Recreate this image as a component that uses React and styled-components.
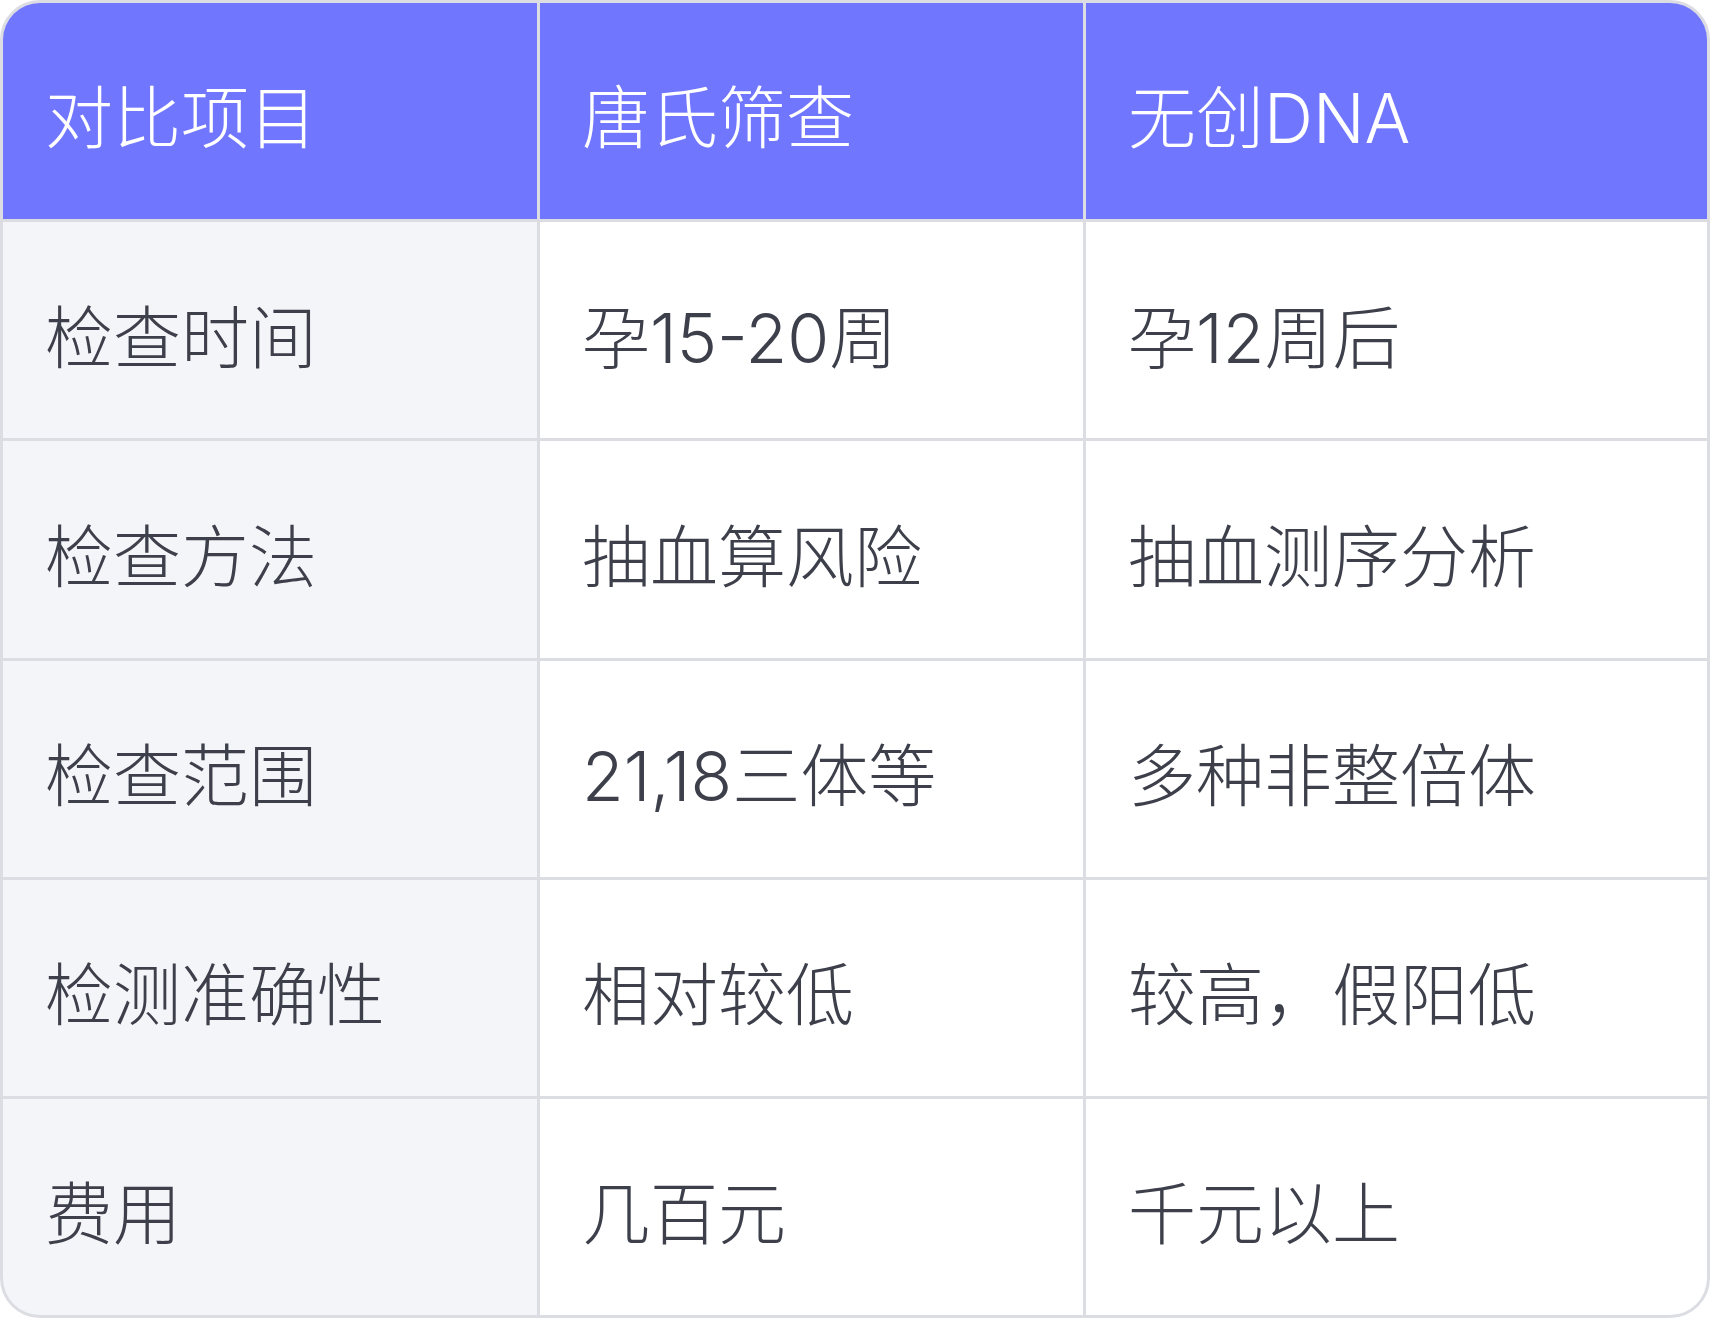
import styled, { createGlobalStyle } from "styled-components"

const GlobalStyle = createGlobalStyle`
  html, body {
    margin: 0;
    padding: 0;
    background: #ffffff;
  }
  * {
    box-sizing: border-box;
  }
`

const rows = [
  ["检查时间", "孕15-20周", "孕12周后"],
  ["检查方法", "抽血算风险", "抽血测序分析"],
  ["检查范围", "21,18三体等", "多种非整倍体"],
  ["检测准确性", "相对较低", "较高，假阳低"],
  ["费用", "几百元", "千元以上"],
]

const Table = styled.div`
  width: 100vw;
  height: 100vh;
  display: grid;
  grid-template-columns: 534px 543px 1fr;
  grid-template-rows: repeat(6, 1fr);
  gap: 3px;
  background-color: #dcdde2;
  border: 3px solid #dcdde2;
  border-radius: 40px;
  overflow: hidden;
  font-family: "Inter", "Noto Sans CJK SC", sans-serif;
  font-weight: 300;
  font-size: 68px;
`

const Cell = styled.div`
  display: flex;
  align-items: center;
  padding: 6px 0 0 42px;
  white-space: nowrap;
  background-color: ${(props) => props.bg};
  color: ${(props) => props.color};
`

const HeadCell = styled(Cell)`
  padding-top: 4px;
`

const App = () => {
  return (
    <>
      <GlobalStyle />
      <Table>
        <HeadCell bg="#7176ff" color="#ffffff">对比项目</HeadCell>
        <HeadCell bg="#7176ff" color="#ffffff">唐氏筛查</HeadCell>
        <HeadCell bg="#7176ff" color="#ffffff">无创DNA</HeadCell>
        {rows.map((row) =>
          row.map((text, i) => (
            <Cell key={row[0] + i} bg={i === 0 ? "#f4f5f9" : "#ffffff"} color="#3d404b">
              {text}
            </Cell>
          ))
        )}
      </Table>
    </>
  )
}

export default App
